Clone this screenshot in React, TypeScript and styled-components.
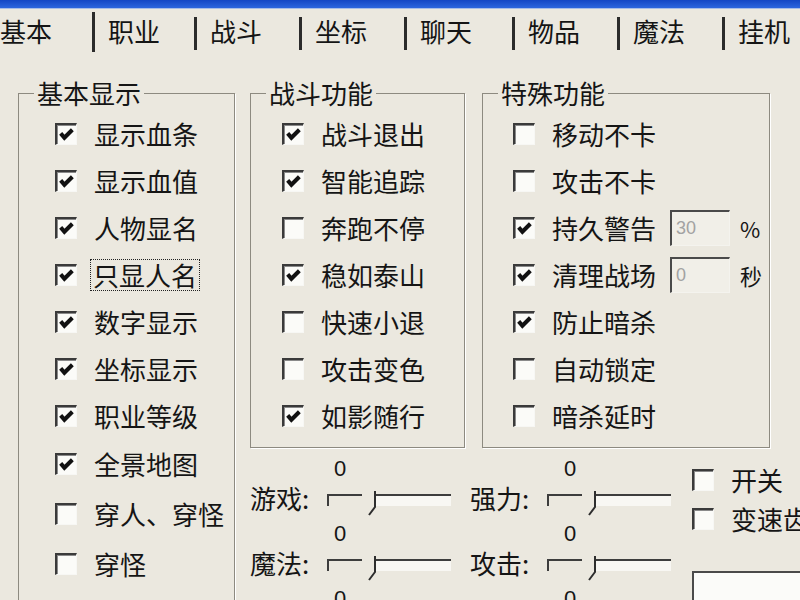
import React from "react";
import styled, { createGlobalStyle } from "styled-components";

const GlobalStyle = createGlobalStyle`
  html, body {
    margin: 0;
    padding: 0;
    background: #ebe8df;
  }
  body {
    font-family: "Noto Sans CJK SC", "Noto Sans", sans-serif;
    color: #151515;
  }
`;

const Window = styled.div`
  width: 800px;
  height: 600px;
  overflow: hidden;
  background: #ebe8df;
  font-size: 26px;
`;

const TitleStrip = styled.div`
  height: 8px;
  background: linear-gradient(#1446c4, #2d66de);
  border-bottom: 1px solid #a9bde6;
`;

const TabBar = styled.div`
  display: flex;
  height: 43px;
  white-space: nowrap;
`;

const Tab = styled.div<{ $w: number; $active?: boolean; $last?: boolean }>`
  position: relative;
  flex: ${(p) => (p.$last ? "1 0 auto" : `0 0 ${p.$w}px`)};
  box-sizing: border-box;
  display: flex;
  align-items: center;
  padding-left: ${(p) => (p.$active ? 0 : 13)}px;
  line-height: 1;

  &::after {
    content: "";
    display: ${(p) => (p.$last ? "none" : "block")};
    position: absolute;
    right: 0;
    top: ${(p) => (p.$active ? 3 : 8)}px;
    bottom: ${(p) => (p.$active ? 0 : 2)}px;
    width: 3px;
    background: #2b2b2b;
  }
`;

const Page = styled.div`
  display: flex;
  align-items: flex-start;
  gap: 15px;
  padding: 26px 0 0 18px;
`;

const Group = styled.fieldset<{ $w: number; $extra?: number }>`
  flex: none;
  margin: 0;
  padding: 2px 0 ${(p) => 8 + (p.$extra ?? 0)}px 0;
  width: ${(p) => p.$w}px;
  min-width: 0;
  box-sizing: border-box;
  border: 1px solid #8d8a80;
  box-shadow: 1px 1px 0 #ffffff;
`;

const Legend = styled.legend`
  margin-left: 15px;
  padding: 0 3px;
  line-height: 30px;
  font-size: 26px;
  white-space: nowrap;
`;

const Items = styled.div<{ $pad: number }>`
  padding-left: ${(p) => p.$pad}px;
`;

const Row = styled.div<{ $h: number }>`
  display: flex;
  align-items: center;
  height: ${(p) => p.$h}px;
  gap: 16px;
  white-space: nowrap;
`;

const Box = styled.span`
  flex: none;
  width: 22px;
  height: 22px;
  box-sizing: border-box;
  border-style: solid;
  border-width: 2px 1px 1px 2px;
  border-color: #3a3a3a #f7f7f4 #f7f7f4 #3a3a3a;
  box-shadow: inset 1px 1px 0 #8a8a8a;
  background: #fbfbf8;
  display: flex;
  align-items: center;
  justify-content: center;
`;

const Label = styled.span<{ $focus?: boolean }>`
  line-height: 30px;
  padding: 0 ${(p) => (p.$focus ? 2 : 0)}px;
  margin-left: ${(p) => (p.$focus ? -3 : 0)}px;
  border: 1px ${(p) => (p.$focus ? "dotted #222" : "solid transparent")};
`;

const ValueField = styled.span`
  flex: none;
  width: 60px;
  height: 36px;
  box-sizing: border-box;
  margin-left: -3px;
  padding-left: 4px;
  border-style: solid;
  border-width: 2px 1px 1px 2px;
  border-color: #4a4a4a #f4f3ee #f4f3ee #4a4a4a;
  background: #f1efe8;
  color: #a2a2a2;
  font-family: "Liberation Sans", Arial, sans-serif;
  font-size: 18px;
  line-height: 32px;
`;

const Unit = styled.span`
  margin-left: -6px;
  font-size: 22px;
`;

const RightSide = styled.div`
  flex: none;
  display: flex;
  flex-direction: column;
`;

const TopGroups = styled.div`
  display: flex;
  gap: 17px;
  align-items: flex-start;
`;

const Bottom = styled.div`
  display: flex;
  padding-top: 7px;
`;

const SliderGrid = styled.div`
  flex: none;
  display: grid;
  grid-template-columns: 220px 222px;
`;

const SliderBlock = styled.div`
  display: flex;
  flex-direction: column;
`;

const Zero = styled.div<{ $x: number }>`
  height: 28px;
  line-height: 28px;
  padding-left: ${(p) => p.$x}px;
  font-family: "Liberation Sans", Arial, sans-serif;
  font-size: 22px;
`;

const SliderRow = styled.div`
  display: flex;
  align-items: center;
  height: 29px;
  padding-bottom: 8px;
`;

const SliderLabel = styled.span`
  flex: 0 0 77px;
  white-space: nowrap;
  line-height: 30px;
`;

const Track = styled.div`
  position: relative;
  width: 124px;
  height: 12px;
  box-sizing: border-box;
  border-top: 2px solid #3d3d3d;
  border-left: 2px solid #3d3d3d;
  background: linear-gradient(90deg, #ebe8df 0 40px, #f8f7f3 40px);
  margin-top: 4px;
`;

const Thumb = styled.svg`
  position: absolute;
  left: 33px;
  top: -6px;
`;

const RightCol = styled.div`
  flex: 1;
  padding-top: 5px;
  white-space: nowrap;
`;

const BigBox = styled.div`
  margin-top: 33px;
  height: 60px;
  width: 140px;
  box-sizing: border-box;
  border-top: 2px solid #4a4a4a;
  border-left: 2px solid #4a4a4a;
  background: #fbfbf9;
`;

type Item = { text: string; on: boolean; focus?: boolean; h?: number; field?: string; unit?: string };

const tabs = [
  { t: "基本", w: 95 },
  { t: "职业", w: 102 },
  { t: "战斗", w: 105 },
  { t: "坐标", w: 105 },
  { t: "聊天", w: 108 },
  { t: "物品", w: 105 },
  { t: "魔法", w: 105 },
  { t: "挂机", w: 80 },
];

const basic: Item[] = [
  { text: "显示血条", on: true },
  { text: "显示血值", on: true },
  { text: "人物显名", on: true },
  { text: "只显人名", on: true, focus: true },
  { text: "数字显示", on: true },
  { text: "坐标显示", on: true },
  { text: "职业等级", on: true },
  { text: "全景地图", on: true, h: 50 },
  { text: "穿人、穿怪", on: false, h: 50 },
  { text: "穿怪", on: false, h: 50 },
];

const fight: Item[] = [
  { text: "战斗退出", on: true },
  { text: "智能追踪", on: true },
  { text: "奔跑不停", on: false },
  { text: "稳如泰山", on: true },
  { text: "快速小退", on: false },
  { text: "攻击变色", on: false },
  { text: "如影随行", on: true },
];

const special: Item[] = [
  { text: "移动不卡", on: false },
  { text: "攻击不卡", on: false },
  { text: "持久警告", on: true, field: "30", unit: "%" },
  { text: "清理战场", on: true, field: "0", unit: "秒" },
  { text: "防止暗杀", on: true },
  { text: "自动锁定", on: false },
  { text: "暗杀延时", on: false },
];

const sliders = ["游戏:", "强力:", "魔法:", "攻击:", "", ""];

function Check({ on }: { on: boolean }) {
  return (
    <Box>
      {on && (
        <svg width="17" height="17" viewBox="0 0 16 16">
          <polyline points="2.5,7 6,11 13.5,3.5" fill="none" stroke="#111" strokeWidth="3.8" />
        </svg>
      )}
    </Box>
  );
}

function CheckRow({ item }: { item: Item }) {
  return (
    <Row $h={item.h ?? 47}>
      <Check on={item.on} />
      <Label $focus={item.focus}>{item.text}</Label>
      {item.field !== undefined && <ValueField>{item.field}</ValueField>}
      {item.unit && <Unit>{item.unit}</Unit>}
    </Row>
  );
}

function Slider({ label, zeroX }: { label: string; zeroX: number }) {
  return (
    <SliderBlock>
      <Zero $x={zeroX}>0</Zero>
      <SliderRow>
        <SliderLabel>{label}</SliderLabel>
        {label && (
          <Track>
            <Thumb width="16" height="26" viewBox="0 0 16 26">
              <polygon points="0,0 14,0 14,17 8,25 0,25" fill="#ebe8df" />
              <polyline points="13,1 13,17 7,25" fill="none" stroke="#2e2e2e" strokeWidth="2" />
            </Thumb>
          </Track>
        )}
      </SliderRow>
    </SliderBlock>
  );
}

export default function App() {
  return (
    <>
      <GlobalStyle />
      <Window>
        <TitleStrip />
        <TabBar>
          {tabs.map((t, i) => (
            <Tab key={t.t} $w={t.w} $active={i === 0} $last={i === tabs.length - 1}>
              {t.t}
            </Tab>
          ))}
        </TabBar>
        <Page>
          <Group $w={217} $extra={60}>
            <Legend>基本显示</Legend>
            <Items $pad={36}>
              {basic.map((it) => (
                <CheckRow key={it.text} item={it} />
              ))}
            </Items>
          </Group>
          <RightSide>
            <TopGroups>
              <Group $w={215}>
                <Legend>战斗功能</Legend>
                <Items $pad={31}>
                  {fight.map((it) => (
                    <CheckRow key={it.text} item={it} />
                  ))}
                </Items>
              </Group>
              <Group $w={288}>
                <Legend>特殊功能</Legend>
                <Items $pad={30}>
                  {special.map((it) => (
                    <CheckRow key={it.text} item={it} />
                  ))}
                </Items>
              </Group>
            </TopGroups>
            <Bottom>
              <SliderGrid>
                {sliders.map((s, i) => (
                  <Slider key={i} label={s} zeroX={i % 2 === 0 ? 84 : 94} />
                ))}
              </SliderGrid>
              <RightCol>
                <CheckRow item={{ text: "开关", on: false, h: 39 }} />
                <CheckRow item={{ text: "变速齿轮", on: false, h: 39 }} />
                <BigBox />
              </RightCol>
            </Bottom>
          </RightSide>
        </Page>
      </Window>
    </>
  );
}
